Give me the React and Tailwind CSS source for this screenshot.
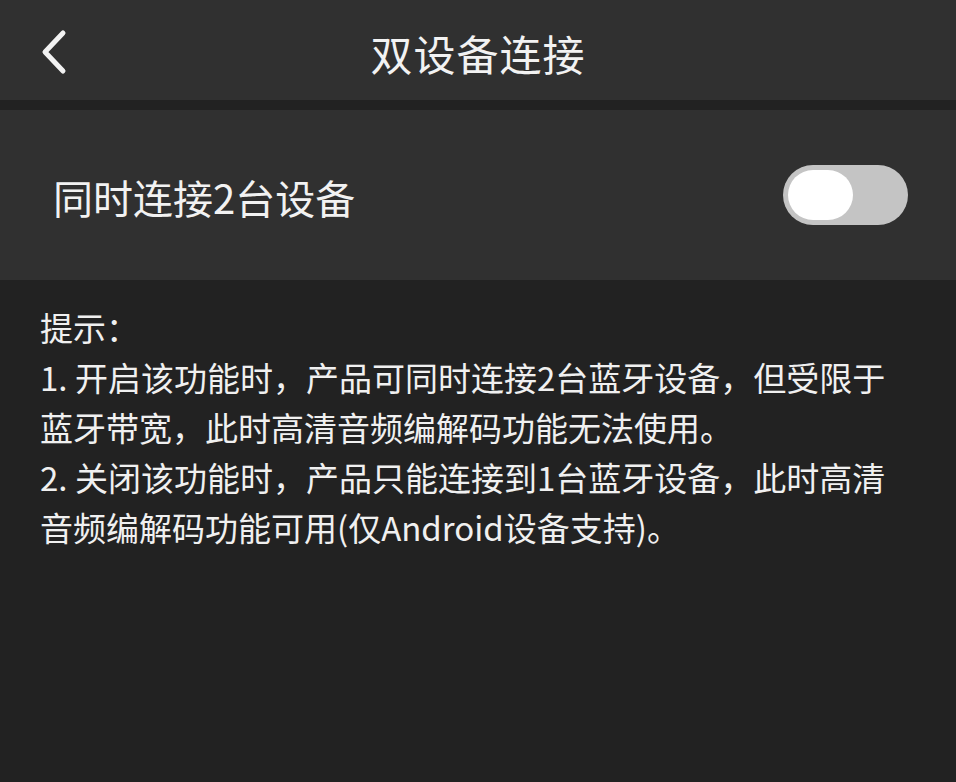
import React from 'react'

const font = { fontFamily: '"Noto Sans CJK SC", "Noto Sans", sans-serif' }

export default function App() {
  return (
    <div className="w-[956px] h-[782px] bg-[#222222] text-[#f2f2f2] flex flex-col" style={font}>
      <header className="h-[100px] bg-[#303030] relative flex items-center justify-center">
        <svg className="absolute left-[38px] top-[29px]" width="30" height="46" viewBox="0 0 30 46">
          <path d="M25 4 L7 23 L25 42" fill="none" stroke="#f2f2f2" strokeWidth="5" strokeLinecap="round" strokeLinejoin="round" />
        </svg>
        <h1 className="text-[42px] leading-none tracking-[1px] mt-[6px]">双设备连接</h1>
      </header>
      <div className="h-[10px]" />
      <div className="h-[170px] bg-[#303030] flex items-center justify-between pl-[53px] pr-[48px]">
        <span className="text-[40px] leading-none mt-[4px]">同时连接2台设备</span>
        <div className="w-[125px] h-[60px] rounded-full bg-[#c4c4c4] flex items-center pl-[5px]">
          <div className="w-[65px] h-[50px] rounded-full bg-white" />
        </div>
      </div>
      <div className="px-[40px] pt-[22px] text-[33px] leading-[50px] text-[#f0f0f0] whitespace-nowrap">
        <p>提示：</p>
        <p>1. 开启该功能时，产品可同时连接2台蓝牙设备，但受限于</p>
        <p>蓝牙带宽，此时高清音频编解码功能无法使用。</p>
        <p>2. 关闭该功能时，产品只能连接到1台蓝牙设备，此时高清</p>
        <p>音频编解码功能可用(仅Android设备支持)。</p>
      </div>
    </div>
  )
}
